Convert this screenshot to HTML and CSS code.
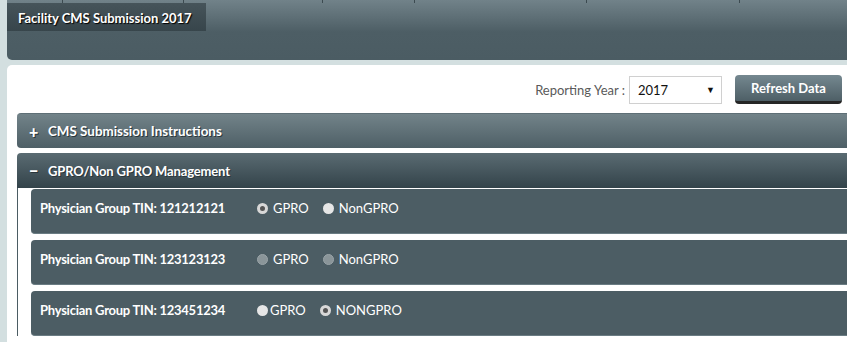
FILE: index.html
```html
<!DOCTYPE html>
<html>
<head>
<meta charset="utf-8">
<link rel="stylesheet" href="styles.css">
</head>
<body>
<div class="page">
  <header class="top">
    <div class="ticks">
      <span style="width:56px"></span>
      <span style="width:121px"></span>
      <span style="width:139px"></span>
      <span style="width:92px"></span>
      <span style="width:172px"></span>
      <span style="width:153px"></span>
    </div>
    <div class="title-tab">Facility CMS Submission 2017</div>
  </header>
  <main class="content">
    <div class="toolbar">
      <label class="year-label">Reporting Year :</label>
      <div class="select"><span>2017</span><span class="arrow">&#9660;</span></div>
      <button class="refresh">Refresh Data</button>
    </div>
    <section class="acc">
      <div class="acc-head closed"><span class="sign">+</span>CMS Submission Instructions</div>
    </section>
    <section class="acc">
      <div class="acc-head open"><span class="sign">&minus;</span>GPRO/Non GPRO Management</div>
      <div class="acc-body">
        <div class="tin-row">
          <span class="tin">Physician Group TIN: 121212121</span>
          <span class="opt"><i class="radio checked"></i>GPRO</span>
          <span class="opt"><i class="radio"></i>NonGPRO</span>
        </div>
        <div class="tin-row">
          <span class="tin">Physician Group TIN: 123123123</span>
          <span class="opt"><i class="radio disabled"></i>GPRO</span>
          <span class="opt"><i class="radio disabled"></i>NonGPRO</span>
        </div>
        <div class="tin-row">
          <span class="tin">Physician Group TIN: 123451234</span>
          <span class="opt tight"><i class="radio"></i>GPRO</span>
          <span class="opt"><i class="radio checked"></i>NONGPRO</span>
        </div>
      </div>
    </section>
  </main>
</div>
</body>
</html>
```

FILE: styles.css
```css
* { box-sizing: border-box; }
html, body { margin: 0; padding: 0; }
body {
  background: #d3dfe0;
  font-family: Lato, "Open Sans", sans-serif;
  width: 847px;
  height: 342px;
  overflow: hidden;
}
.page { padding-left: 7px; }
.top {
  height: 60px;
  background: linear-gradient(#718289 0px, #5d6e75 18px, #4d5e65 32px, #4b5c63 100%);
  border-bottom-left-radius: 5px;
}
.ticks { display: flex; height: 3px; }
.ticks span { border-right: 1px solid #3c4a50; height: 3px; }
.title-tab {
  width: 199px;
  height: 28px;
  background: linear-gradient(#46545a, #37454b);
  color: #fff;
  font-weight: 700;
  font-size: 13px;
  padding: 7px 0 0 11px;
  text-shadow: 1px 1px 1px #000;
}
.content {
  margin-top: 5px;
  background: #fff;
  border-top-left-radius: 5px;
  padding: 10px 0 0 10px;
  height: 277px;
}
.toolbar {
  display: flex;
  justify-content: flex-end;
  align-items: center;
  height: 29px;
  margin-bottom: 9px;
  padding-right: 5px;
}
.year-label {
  color: #5a5a5a;
  font-size: 13px;
  margin-right: 4px;
}
.select {
  width: 93px;
  height: 28px;
  border: 1px solid #d0d0d0;
  display: flex;
  justify-content: space-between;
  align-items: center;
  padding: 0 6px 0 8px;
  font-size: 13px;
  color: #111;
  margin-right: 13px;
}
.select .arrow { font-size: 9px; }
.refresh {
  width: 107px;
  height: 29px;
  border: 0;
  border-bottom: 3px solid #262626;
  border-radius: 4px;
  background: linear-gradient(#758890, #4e5f66);
  color: #fff;
  font-family: inherit;
  font-weight: 700;
  font-size: 13px;
  padding: 0;
}
.acc { margin-bottom: 5px; }
.acc-head {
  height: 35px;
  color: #fff;
  font-weight: 700;
  font-size: 13px;
  display: flex;
  align-items: center;
  padding-left: 12px;
  border-radius: 4px 0 0 4px;
  text-shadow: 1px 1px 0 #2a363b;
}
.acc-head .sign { width: 19px; font-size: 16px; font-weight: 900; }
.closed { background: linear-gradient(#728389, #4e5f66); border-top: 1px solid #5e6f76; }
.open { background: linear-gradient(#5a6b72, #33434a); border-radius: 4px 0 0 0; }
.closed { font-size: 13.4px; }
.open { letter-spacing: -0.15px; }
.acc-body {
  border-left: 1px solid #4b5c63;
  padding: 1px 0 0 13px;
  display: flex;
  flex-direction: column;
  gap: 6px;
}
.tin-row {
  height: 45px;
  background: #4c5d64;
  border-radius: 4px 0 0 4px;
  border-bottom: 1px solid #6a7c83;
  display: flex;
  align-items: flex-start;
  padding: 11px 0 0 9px;
  color: #fff;
  font-size: 13px;
}
.tin { font-weight: 700; width: 217px; letter-spacing: -0.25px; }
.opt { display: flex; align-items: center; margin-right: 14px; }
.radio {
  width: 11px;
  height: 11px;
  border-radius: 50%;
  background: #e6e6e6;
  margin-right: 5px;
  display: inline-block;
}
.radio.checked { border: 3px solid #d8d8d8; background: #555; }
.radio.disabled { background: #8a9599; border: 1px solid #9aa4a8; }
.tight .radio { margin-right: 2px; }
```
